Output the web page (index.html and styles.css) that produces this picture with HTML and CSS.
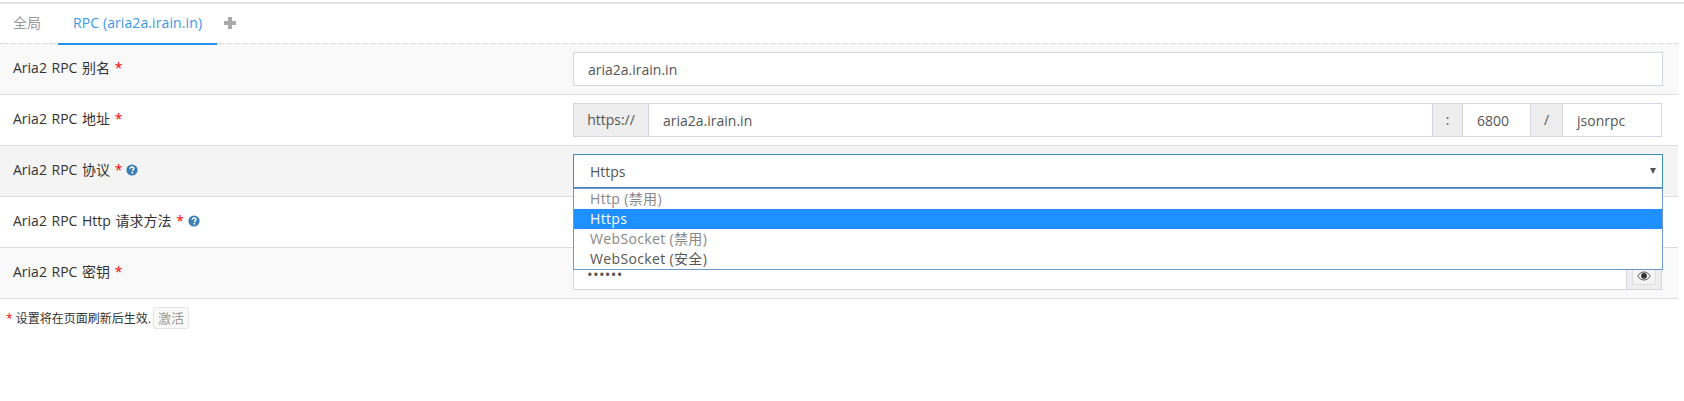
FILE: index.html
```html
<!DOCTYPE html>
<html lang="zh-CN">
<head>
<meta charset="utf-8">
<title>Aria2 RPC</title>
<link rel="stylesheet" href="styles.css">
</head>
<body>
<div class="panel">
  <nav class="tabs">
    <a class="tab">全局</a>
    <a class="tab active">RPC (aria2a.irain.in)</a>
    <a class="tab-add" aria-label="add">
      <svg class="plus" width="12" height="12" viewBox="0 0 12 12"><path d="M4 0h4v4h4v4H8v4H4V8H0V4h4z" fill="#aaa"/></svg>
    </a>
  </nav>
  <div class="row odd">
    <div class="label">Aria2 RPC 别名 <span class="req">*</span></div>
    <div class="field"><div class="control text">aria2a.irain.in</div></div>
  </div>
  <div class="row">
    <div class="label">Aria2 RPC 地址 <span class="req">*</span></div>
    <div class="field group">
      <div class="addon a-proto">https://</div>
      <div class="control part grow">aria2a.irain.in</div>
      <div class="addon a-colon">:</div>
      <div class="control part port">6800</div>
      <div class="addon a-slash">/</div>
      <div class="control part iface">jsonrpc</div>
    </div>
  </div>
  <div class="row hover">
    <div class="label">Aria2 RPC 协议 <span class="req">*</span>
      <svg class="help" width="12" height="12" viewBox="0 0 12 12"><circle cx="6" cy="6" r="5.6" fill="#3a80b4"/><path d="M4.100 4.700C4.200 3.500 5 3 6 3s1.900.6 1.900 1.600c0 1.300-1.500 1.300-1.500 2.600" fill="none" stroke="#fff" stroke-width="1.400"/><rect x="5.500" y="8" width="1.700" height="1.500" fill="#fff"/></svg>
    </div>
    <div class="field select-wrap">
      <div class="control select">Https<span class="caret"></span></div>
      <ul class="menu">
        <li class="dim">Http (禁用)</li>
        <li class="sel">Https</li>
        <li class="dim">WebSocket (禁用)</li>
        <li>WebSocket (安全)</li>
      </ul>
    </div>
  </div>
  <div class="row">
    <div class="label">Aria2 RPC Http 请求方法 <span class="req">*</span>
      <svg class="help" width="12" height="12" viewBox="0 0 12 12"><circle cx="6" cy="6" r="5.6" fill="#3a80b4"/><path d="M4.100 4.700C4.200 3.500 5 3 6 3s1.900.6 1.900 1.600c0 1.300-1.500 1.300-1.500 2.600" fill="none" stroke="#fff" stroke-width="1.400"/><rect x="5.500" y="8" width="1.700" height="1.500" fill="#fff"/></svg>
    </div>
    <div class="field"><div class="control text"></div></div>
  </div>
  <div class="row odd">
    <div class="label">Aria2 RPC 密钥 <span class="req">*</span></div>
    <div class="field group">
      <div class="control part grow secret">••••••</div>
      <div class="addon a-eye"><span class="eye-btn">
        <svg width="14" height="10" viewBox="0 0 14 10"><path d="M.7 5C2.300 2.500 4.500 1 7 1s4.700 1.500 6.300 4C11.700 7.500 9.500 9 7 9S2.300 7.500.7 5z" fill="none" stroke="#555" stroke-width="1"/><circle cx="7" cy="4.800" r="2.900" fill="#333"/></svg>
      </span></div>
    </div>
  </div>
  <div class="foot"><span class="req">*</span> 设置将在页面刷新后生效. <button class="activate">激活</button></div>
</div>
</body>
</html>
```
FILE: styles.css
```css
* { box-sizing: border-box; }
html, body { margin: 0; background: #fff; }
body {
  font-family: "Open Sans", "Noto Sans CJK SC", sans-serif;
  font-size: 14px;
  color: #333;
  padding-top: 2px;
}
.panel { border-top: 2px solid #e2e2e2; }
.tabs {
  display: flex;
  align-items: stretch;
  width: 1678px;
  height: 40px;
  border-bottom: 1px dotted #ccc;
}
.tab {
  padding: 0 12px 0 13px;
  line-height: 37px;
  color: #999;
}
.tab:first-child { margin-right: 5px; }
.tab.active {
  color: #3c97e8;
  border-bottom: 2px solid #2a8fe6;
  height: 41px;
  padding: 0 15px;
  letter-spacing: .1px;
}
.tab-add { padding: 13px 0 0 7px; }
.plus { display: block; }
.row {
  display: flex;
  align-items: center;
  width: 1678px;
  height: 51px;
  padding: 0 15px 1px 13px;
  border-bottom: 1px solid #ddd;
}
.row.odd { background: #f9f9f9; }
.row.hover { background: #f4f4f4; }
.label { width: 560px; flex: none; padding-bottom: 4px; word-spacing: 1px; }
.req { color: #f00; }
.help { vertical-align: -1px; margin-left: -1px; }
.field { flex: 1; min-width: 0; }
.group { display: flex; margin-right: 1px; }
.control {
  height: 34px;
  line-height: 33px;
  padding: 0 14px;
  background: #fff;
  border: 1px solid #d2d6de;
  color: #555;
}
.part { border-left: 0; }
.grow { flex: 1; min-width: 0; }
.port { width: 69px; flex: none; }
.iface { width: 100px; flex: none; }
.addon {
  height: 34px;
  line-height: 31px;
  flex: none;
  text-align: center;
  background: #eee;
  border: 1px solid #d2d6de;
  color: #555;
}
.addon + .control { border-left: 1px solid #d2d6de; }
.a-proto { width: 75px; border-right: 0; }
.a-colon { width: 29px; border-left: 0; border-right: 0; }
.a-slash { width: 31px; border-left: 0; border-right: 0; }
.a-eye { width: 35px; border-left: 0; padding: 5px 5px 0; }
.secret {
  border-left: 1px solid #d2d6de;
  font-size: 15px;
  line-height: 34px;
  padding: 0 13px;
  letter-spacing: .3px;
}
.eye-btn {
  display: flex;
  justify-content: center;
  padding-top: 8px;
  height: 23px;
  background: #f4f4f4;
  border: 1px solid #ddd;
  border-radius: 3px;
}
.select-wrap { position: relative; }
.select {
  position: relative;
  border-color: #3c8dbc;
  padding: 0 16px;
  line-height: 34px;
}
.caret {
  position: absolute;
  right: 6px;
  top: 13px;
  border: 3px solid transparent;
  border-top: 6px solid #555;
  border-bottom: 0;
}
.menu {
  position: absolute;
  z-index: 2;
  left: 0;
  right: 0;
  top: 34px;
  margin: 0;
  padding: 0;
  list-style: none;
  background: #fff;
  border: 1px solid #7096d0;
}
.menu li { height: 20px; line-height: 19px; padding: 0 16px; color: #555; letter-spacing: .35px; }
.menu .dim { color: #888; }
.menu .sel { background: #1e90ff; color: #fff; }
.foot { padding: 8px 0 0 6px; font-size: 12px; line-height: 22px; }
.activate {
  height: 22px;
  width: 36px;
  margin-left: -1px;
  padding: 0;
  font: inherit;
  font-size: 13px;
  line-height: 18px;
  color: #999;
  background: #f9f9f9;
  border: 1px solid #e3e3e3;
  border-radius: 3px;
}
```
